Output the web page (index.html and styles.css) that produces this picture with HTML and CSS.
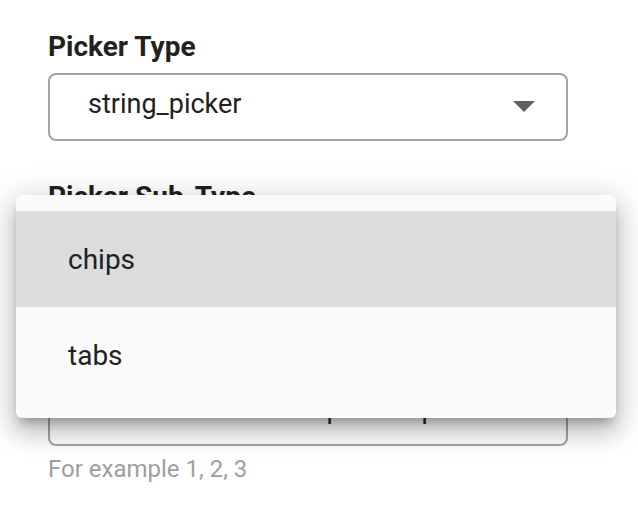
FILE: index.html
```html
<!DOCTYPE html>
<html>
<head>
<meta charset="utf-8">
<link rel="stylesheet" href="styles.css">
</head>
<body>
<div class="form">
  <div class="field">
    <div class="label">Picker Type</div>
    <div class="select">
      <span class="value">string_picker</span>
      <svg class="arrow" width="22" height="11" viewBox="0 0 22 11"><path d="M0 0 H22 L11 11 Z" fill="#5f5f5f"/></svg>
    </div>
  </div>
  <div class="field">
    <div class="label">Picker Sub-Type</div>
    <div class="select">
      <span class="value">chips</span>
      <svg class="arrow" width="22" height="11" viewBox="0 0 22 11"><path d="M0 0 H22 L11 11 Z" fill="#5f5f5f"/></svg>
    </div>
  </div>
  <div class="field last">
    <div class="label">Options</div>
    <div class="select">
      <span class="value">Enter values for the picker options</span>
    </div>
    <div class="helper">For example 1, 2, 3</div>
  </div>
</div>
<div class="menu">
  <div class="item selected">chips</div>
  <div class="item">tabs</div>
</div>
</body>
</html>
```
FILE: styles.css
```css
html, body {
  margin: 0;
  padding: 0;
  background: #ffffff;
  font-family: Roboto, "Liberation Sans", sans-serif;
  color: #212121;
}
.form {
  width: 520px;
  margin-left: 48px;
  padding-top: 31px;
  display: flex;
  flex-direction: column;
  gap: 40px;
}
.field {
  display: flex;
  flex-direction: column;
}
.field.last {
  margin-top: 5px;
}
.label {
  font-weight: 700;
  font-size: 28px;
  line-height: 32px;
  margin-bottom: 10px;
  white-space: nowrap;
}
.select {
  box-sizing: border-box;
  height: 68px;
  border: 2px solid #a3a3a3;
  border-radius: 8px;
  display: flex;
  align-items: center;
  justify-content: space-between;
  padding: 0 31px 6px 38px;
  overflow: hidden;
}
.value {
  font-size: 27px;
  line-height: 32px;
  color: #212121;
  white-space: nowrap;
}
.arrow {
  display: block;
  margin-top: 4px;
}
.helper {
  margin-top: 9px;
  font-size: 24px;
  line-height: 28px;
  color: #9e9e9e;
}
.menu {
  position: absolute;
  left: 16px;
  top: 195px;
  width: 600px;
  box-sizing: border-box;
  padding: 16px 0 15px;
  background: #fafafa;
  border-radius: 6px;
  box-shadow: 0 8px 10px -4px rgba(0,0,0,0.24), 0 14px 22px 2px rgba(0,0,0,0.16), 0 6px 32px 6px rgba(0,0,0,0.13);
}
.item {
  height: 96px;
  display: flex;
  align-items: center;
  padding-left: 52px;
  font-size: 28px;
  color: #212121;
}
.item.selected {
  background: #dcdcdc;
}
```
